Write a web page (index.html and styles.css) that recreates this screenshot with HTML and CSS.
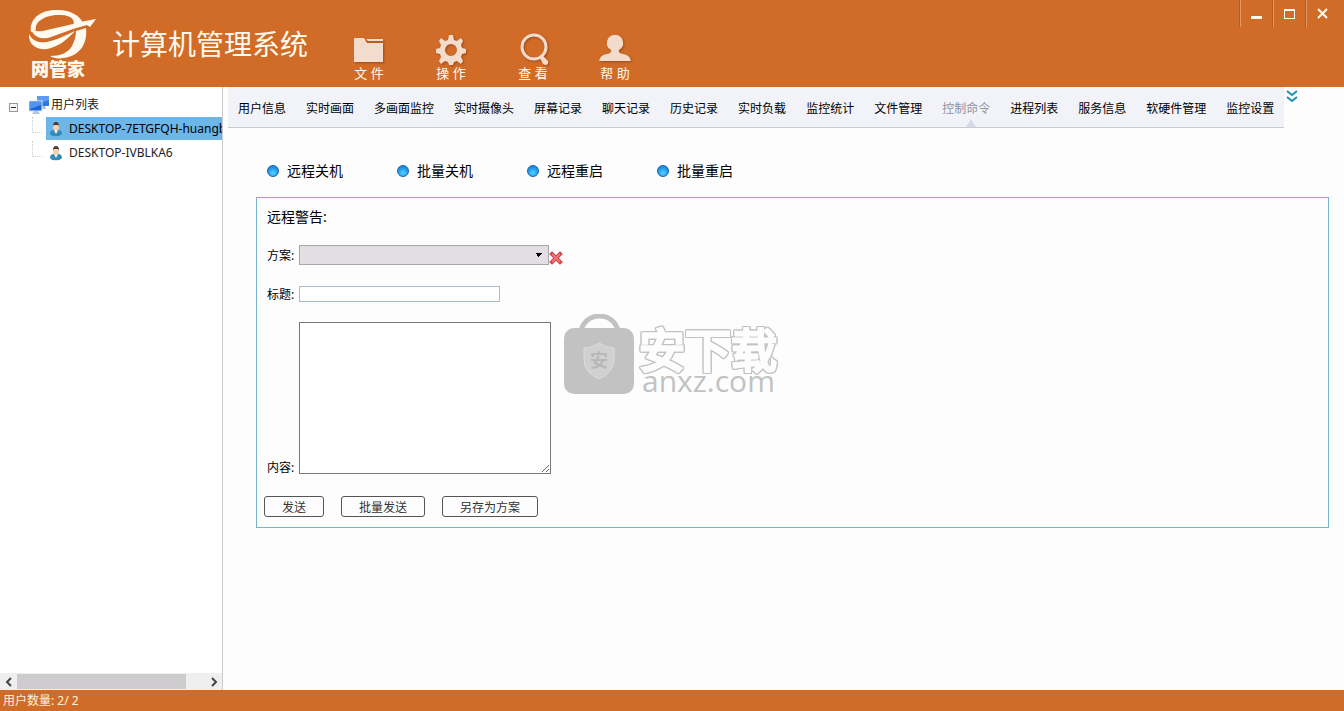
FILE: index.html
```html
<!DOCTYPE html>
<html lang="zh-CN">
<head>
<meta charset="utf-8">
<title>计算机管理系统</title>
<link rel="stylesheet" href="styles.css">
</head>
<body>
<div class="app">
  <header class="header">
    <div class="logo">
      <svg class="logo-mark" viewBox="0 0 68 52" aria-hidden="true">
        <path fill="#fffaf0" d="M3 24C1 10 14 1 30 2c13 0 22 6 25 13L45 18c3-6-2-11-12-11C19 6 6 13 8 22z"/>
        <path fill="#fffaf0" d="M3 20c3 4 9 4 16 2l26-6 12-3 11-2-6 8-3-2-14 4-22 8C15 32 5 30 3 20z"/>
        <path fill="#fffaf0" d="M1 26c4 8 11 9 18 8 10-2 19-7 28-11-8 9-17 16-28 18C9 42 0 37 1 26z"/>
        <path fill="#fffaf0" d="M48 23l10-3c2 17-8 29-23 30-5 1-10 0-13-2 10 0 18-3 22-10 2-4 4-9 4-15z"/>
      </svg>
      <span class="logo-name">网管家</span>
    </div>
    <h1 class="title">计算机管理系统</h1>
    <nav class="menu">
      <button class="menu-item" type="button">
        <svg class="menu-icon" viewBox="0 0 34 32"><path d="M2 5h10l3 5h16v19H2zM14 6h17v2H16z"/></svg>
        <span>文 件</span>
      </button>
      <button class="menu-item" type="button">
        <svg class="menu-icon" viewBox="0 0 34 32"><path fill-rule="evenodd" d="M15 2h4l1 5 3 1 4-3 2 3-2 4 1 3 4 1v4l-4 1-1 3 2 4-2 3-4-3-3 1-1 3h-4l-1-3-3-1-4 3-2-3 2-4-1-3-4-1v-4l4-1 1-3-2-4 2-3 4 3 3-1zM17 11a6 6 0 1 0 0 12a6 6 0 1 0 0-12z"/></svg>
        <span>操 作</span>
      </button>
      <button class="menu-item" type="button">
        <svg class="menu-icon" viewBox="0 0 34 32"><circle class="lens" cx="18" cy="14" r="12"/><path d="M24 25l3-2 5 5q1 3-2 4-3 0-4-3z"/></svg>
        <span>查 看</span>
      </button>
      <button class="menu-item" type="button">
        <svg class="menu-icon" viewBox="0 0 34 32"><path d="M17 2a8 8 0 0 1 4 15q-1 3 4 4 7 1 8 7H1q1-6 8-7 5-1 4-4a8 8 0 0 1 4-15z"/></svg>
        <span>帮 助</span>
      </button>
    </nav>
    <div class="window-controls">
      <button type="button" aria-label="最小化"><svg viewBox="0 0 14 14"><path d="M1 10.500h11" stroke-width="3"/></svg></button>
      <button type="button" aria-label="最大化"><svg viewBox="0 0 14 14"><path d="M1.500 3v9M11.500 3v9M1 11.500h11"/><path d="M1 3h11" stroke-width="2"/></svg></button>
      <button type="button" aria-label="关闭"><svg viewBox="0 0 14 14"><path d="M2 2l9 9M11 2l-9 9" stroke-width="2"/></svg></button>
    </div>
  </header>

  <div class="body">
    <aside class="sidebar">
      <ul class="tree">
        <li class="tree-root">
          <button class="toggle" type="button" aria-label="折叠"></button>
          <svg class="pc-icon" viewBox="0 0 20 20">
            <rect x="8" y="1" width="12" height="10" fill="#2f78dc"/><path d="M8 1h12v4l-12 4z" fill="#5d9cf0"/><path d="M13 11h3l1 3h-5z" fill="#a9bdd0"/>
            <rect x="0" y="6" width="13" height="10" fill="#1f66d4" stroke="#dfe9f5"/><path d="M1 7h11v3L1 14z" fill="#4f94f0"/><path d="M5 16h4l2 3H3z" fill="#b4c4d2"/>
          </svg>
          <span>用户列表</span>
        </li>
        <li class="tree-row">
          <span class="branch"></span>
          <span class="node selected">
            <svg class="user-icon" viewBox="0 0 14 16"><path d="M1 13q0-4 4-4h4q4 0 4 4-3 3-6 2-4 1-6-2z" fill="#318db5"/><path d="M5 9h4l-2 4z" fill="#fff"/><ellipse cx="7" cy="6" rx="3" ry="4" fill="#f2d1b3"/><path d="M4 5q0-4 3-4t3 4l-1-1H5z" fill="#4b3b31"/></svg>
            <span>DESKTOP-7ETGFQH-huangbo</span>
          </span>
        </li>
        <li class="tree-row">
          <span class="branch"></span>
          <span class="node">
            <svg class="user-icon" viewBox="0 0 14 16"><path d="M1 13q0-4 4-4h4q4 0 4 4-3 3-6 2-4 1-6-2z" fill="#318db5"/><path d="M5 9h4l-2 4z" fill="#fff"/><ellipse cx="7" cy="6" rx="3" ry="4" fill="#f2d1b3"/><path d="M4 5q0-4 3-4t3 4l-1-1H5z" fill="#4b3b31"/></svg>
            <span>DESKTOP-IVBLKA6</span>
          </span>
        </li>
      </ul>
      <div class="scrollbar">
        <button type="button" aria-label="向左滚动"><svg viewBox="0 0 8 10"><path d="M6 1L2 5l4 4"/></svg></button>
        <div class="track"><div class="thumb"></div></div>
        <button type="button" aria-label="向右滚动"><svg viewBox="0 0 8 10"><path d="M2 1l4 4-4 4"/></svg></button>
      </div>
    </aside>

    <main class="main">
      <div class="tabs-row">
        <nav class="tabs">
          <button type="button">用户信息</button>
          <button type="button">实时画面</button>
          <button type="button">多画面监控</button>
          <button type="button">实时摄像头</button>
          <button type="button">屏幕记录</button>
          <button type="button">聊天记录</button>
          <button type="button">历史记录</button>
          <button type="button">实时负载</button>
          <button type="button">监控统计</button>
          <button type="button">文件管理</button>
          <button type="button" class="active">控制命令</button>
          <button type="button">进程列表</button>
          <button type="button">服务信息</button>
          <button type="button">软硬件管理</button>
          <button type="button">监控设置</button>
        </nav>
        <button class="more" type="button" aria-label="更多"><svg viewBox="0 0 12 13"><path d="M1 1l5 4 5-4M1 7l5 4 5-4"/></svg></button>
      </div>

      <section class="content">
        <div class="commands">
          <button type="button"><i class="dot"></i>远程关机</button>
          <button type="button"><i class="dot"></i>批量关机</button>
          <button type="button"><i class="dot"></i>远程重启</button>
          <button type="button"><i class="dot"></i>批量重启</button>
        </div>
        <form class="panel">
          <h2>远程警告:</h2>
          <div class="field plan">
            <label for="plan">方案:</label>
            <select id="plan"><option></option></select>
            <button class="delete" type="button" aria-label="删除方案"><svg viewBox="0 0 14 14"><path d="M3 3l8 8M11 3l-8 8" stroke="#cf4549" stroke-width="4" stroke-linecap="square"/><path d="M3 3l8 8M11 3l-8 8" stroke="#f07475" stroke-width="2"/></svg></button>
          </div>
          <div class="field subject">
            <label for="subject">标题:</label>
            <input id="subject" type="text">
          </div>
          <div class="field message">
            <label for="message">内容:</label>
            <textarea id="message"></textarea>
          </div>
          <div class="actions">
            <button type="button">发送</button>
            <button type="button">批量发送</button>
            <button type="button">另存为方案</button>
          </div>
        </form>
      </section>
    </main>
  </div>

  <footer class="status">用户数量: 2/ 2</footer>
</div>

<div class="watermark">
  <svg class="bag" viewBox="0 0 72 80">
    <path d="M18 17C22-3 51-3 55 17" fill="none" stroke="#c2c2c2" stroke-width="5"/>
    <rect x="1" y="14" width="70" height="66" rx="10" fill="#c2c2c2"/>
    <path d="M36 29q8 5 15 5v12q0 12-15 19-15-7-15-19V34q8 0 15-5z" fill="#d0d0d0" stroke="#dcdcdc"/>
    <text x="36" y="53" class="bag-text">安</text>
  </svg>
  <div class="watermark-words">
    <span class="watermark-name">安下载</span>
    <span class="watermark-site">anxz.com</span>
  </div>
</div>
</body>
</html>
```

FILE: styles.css
```css
* { box-sizing: border-box; }

body {
  margin: 0;
  font: 12px/16px "Noto Sans", "Noto Sans CJK SC", sans-serif;
  color: #000;
  background: #fdfdfd;
}

button {
  margin: 0;
  padding: 0;
  border: 0;
  background: none;
  font: inherit;
  color: inherit;
}

.app {
  display: flex;
  flex-direction: column;
  min-height: 100vh;
}

/* Header */
.header {
  display: flex;
  height: 87px;
  padding-left: 28px;
  background: #d06c28;
  color: #fffaf0;
}

.logo {
  display: flex;
  flex-direction: column;
  width: 84px;
  padding-top: 8px;
}

.logo-mark { width: 68px; height: 52px; }

.logo-name {
  padding-left: 3px;
  font: 900 18px/16px "Noto Sans CJK SC", sans-serif;
}

.title {
  margin: 23px 0 0;
  font: 400 28px/40px "Noto Sans CJK SC", sans-serif;
}

.menu {
  display: flex;
  align-items: flex-start;
  margin-left: 20px;
  padding-top: 33px;
}

.menu-item {
  display: flex;
  flex-direction: column;
  align-items: center;
  width: 82px;
  font-size: 13px;
}

.menu-icon {
  width: 34px;
  height: 32px;
  fill: #f4dccd;
  filter: drop-shadow(1px 1px 1px #a0481a);
}

.lens { fill: none; stroke: #f4dccd; stroke-width: 3; }

.window-controls {
  display: flex;
  margin-left: auto;
  padding-right: 5px;
  height: 27px;
}

.window-controls button {
  display: grid;
  place-items: center;
  width: 33px;
  border-left: 1px solid #e39a6b;
  box-shadow: -1px 0 #b85a1d;
}

.window-controls svg {
  width: 14px;
  height: 14px;
  fill: none;
  stroke: #fffaf0;
}

/* Body */
.body { display: flex; flex: 1; }

.sidebar {
  display: flex;
  flex-direction: column;
  flex: none;
  width: 223px;
  border-right: 1px solid #ccc;
  background: #fff;
  color: #222;
}

.tree {
  flex: 1;
  margin: 0;
  padding: 6px 0 0;
  list-style: none;
  overflow: hidden;
}

.tree-root {
  display: flex;
  align-items: center;
  height: 24px;
  padding-left: 9px;
}

.toggle {
  display: grid;
  place-items: center;
  width: 9px;
  height: 9px;
  margin: 5px 11px 0 0;
  border: 1px solid #999;
  background: #f5f5f5;
}

.toggle::before {
  content: "";
  width: 5px;
  height: 1px;
  background: #333;
}

.pc-icon { width: 20px; height: 20px; margin-right: 2px; }

.tree-row {
  display: flex;
  height: 24px;
  padding-left: 32px;
}

.branch {
  flex: none;
  width: 10px;
  height: 16px;
  margin-right: 4px;
  border-left: 1px dotted #ccc;
  border-bottom: 1px dotted #ccc;
}

.node {
  display: flex;
  flex: 1;
  align-items: center;
  gap: 6px;
  height: 23px;
  padding-left: 3px;
  white-space: nowrap;
  overflow: hidden;
}

.node.selected { background: #6cb6e8; color: #000; }

.user-icon { flex: none; width: 14px; height: 16px; }

.scrollbar { display: flex; height: 17px; background: #f0eff0; }

.scrollbar button { display: grid; place-items: center; width: 17px; }

.scrollbar svg {
  width: 8px;
  height: 10px;
  fill: none;
  stroke: #444;
  stroke-width: 2;
}

.track { flex: 1; }

.thumb { width: 90%; height: 15px; margin-top: 1px; background: #cdcbcd; }

.main { flex: 1; min-width: 0; padding-left: 5px; }

.tabs-row { display: flex; align-items: flex-start; }

.tabs {
  display: flex;
  height: 41px;
  border-bottom: 1px solid #c8cad2;
  background: #f2f3f8;
}

.tabs button {
  position: relative;
  padding: 3px 10px 0;
  white-space: nowrap;
}

.tabs .active { color: #8c92a4; }

.tabs .active::after {
  content: "";
  position: absolute;
  bottom: 0;
  left: 34px;
  border: 5px solid transparent;
  border-top: 0;
  border-bottom: 8px solid #d6dae6;
}

.more { margin: 3px 0 0 2px; }

.more svg {
  display: block;
  width: 12px;
  height: 13px;
  fill: none;
  stroke: #1d90b4;
  stroke-width: 2;
}

.content { padding: 32px 15px 0 28px; }

.commands {
  display: flex;
  padding-left: 11px;
  font-size: 14px;
  line-height: 22px;
}

.commands button {
  display: flex;
  align-items: center;
  gap: 8px;
  width: 130px;
}

.dot {
  width: 12px;
  height: 12px;
  border: 1px solid #1b62b4;
  border-radius: 50%;
  background: radial-gradient(circle at 50% 70%, #4fd4ff, #1687e0 75%);
}

.panel {
  display: flex;
  flex-direction: column;
  margin-top: 15px;
  padding: 8px 10px 10px;
  border: 1px solid #76b3cc;
}

.panel h2 {
  margin: 0;
  font-size: 14px;
  font-weight: 400;
  line-height: 22px;
}

.field { display: flex; align-items: center; }

.field label { flex: none; width: 32px; padding-top: 3px; }

.field select,
.field input,
.field textarea {
  margin: 0;
  border-radius: 0;
  font: inherit;
}

.plan { margin-top: 16px; }

.plan select {
  width: 250px;
  height: 20px;
  padding: 0 4px;
  appearance: none;
  border: 1px solid #a9a7ae;
  background:
    linear-gradient(to bottom left, #000 50%, transparent 50%) right 9px center / 4px 4px no-repeat,
    linear-gradient(to bottom right, #000 50%, transparent 50%) right 5px center / 4px 4px no-repeat,
    #e1dfe2;
}

.delete { margin-top: 7px; }

.delete svg { display: block; width: 14px; height: 14px; }

.subject { margin-top: 19px; }

.subject input {
  width: 201px;
  height: 16px;
  padding: 0 3px;
  border: 1px solid #a3bdd3;
  background: #fff;
}

.message { align-items: flex-end; margin-top: 19px; }

.message label { line-height: 12px; }

.message textarea {
  width: 252px;
  height: 152px;
  border: 1px solid #777;
  background: #fff;
}

.actions {
  display: flex;
  gap: 17px;
  margin: 22px 0 0 -3px;
}

.actions button {
  height: 21px;
  padding: 3px 17px 0;
  border: 1px solid #555;
  border-radius: 3px;
  color: #333;
  line-height: 16px;
}

.status {
  height: 21px;
  padding: 3px 3px 0;
  background: #d06c28;
  color: #fff0dc;
}

/* Watermark floating over the page */
.watermark {
  position: absolute;
  top: 314px;
  left: 563px;
  display: flex;
  gap: 4px;
  color: #c2c2c2;
  pointer-events: none;
}

.bag { width: 72px; height: 80px; }

.bag-text {
  fill: #b8b8b8;
  font: 700 18px "Noto Sans CJK SC", sans-serif;
  text-anchor: middle;
}

.watermark-words {
  display: flex;
  flex-direction: column;
  padding-top: 12px;
}

.watermark-name {
  color: #fdfdfd;
  font: 400 46px/42px "Noto Sans CJK SC", sans-serif;
  -webkit-text-stroke: 3px #fdfdfd;
  filter: drop-shadow(1px 0 #c2c2c2) drop-shadow(-1px 0 #c2c2c2) drop-shadow(0 1px #c2c2c2) drop-shadow(0 -1px #c2c2c2);
}

.watermark-site {
  padding-left: 3px;
  font: 400 30px/26px "Open Sans", sans-serif;
}
```
